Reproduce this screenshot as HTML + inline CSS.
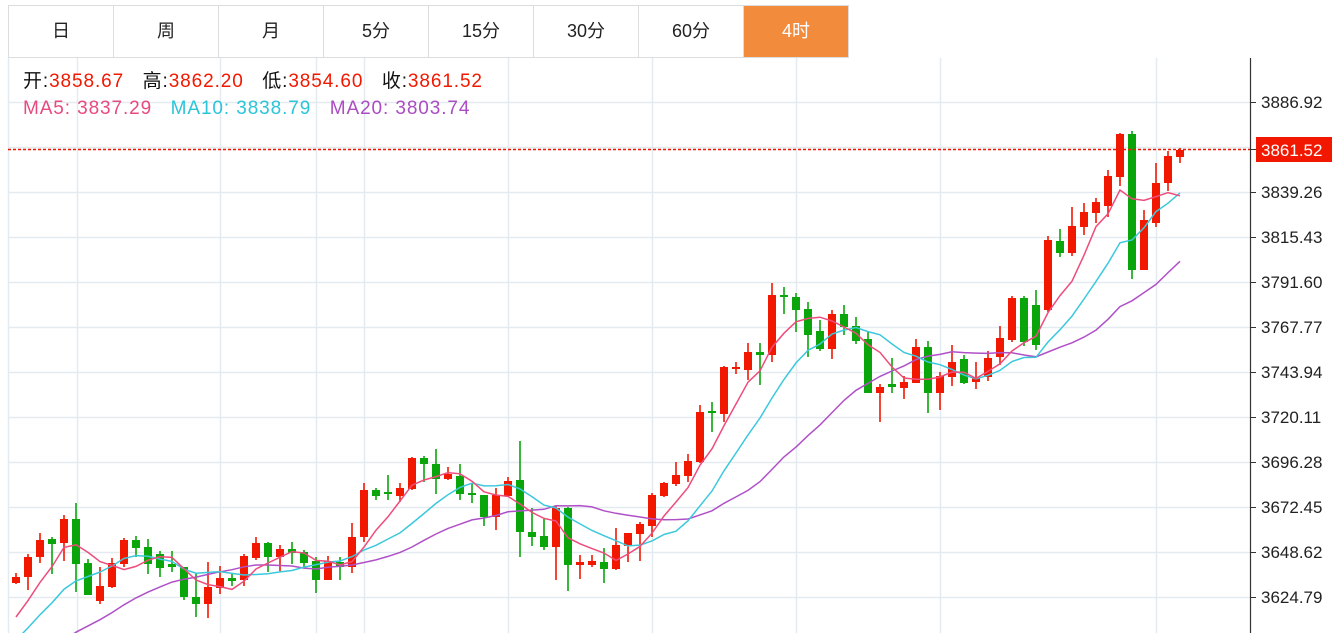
<!DOCTYPE html>
<html><head><meta charset="utf-8">
<style>
html,body{margin:0;padding:0;background:#fff;width:1332px;height:633px;overflow:hidden;font-family:"Liberation Sans","Noto Sans CJK SC",sans-serif;position:relative}
.tabs{position:absolute;left:8px;top:5px;height:53px;display:flex;border:1px solid #ddd;border-right:none;box-sizing:border-box}
.tab{width:105px;height:51px;line-height:51px;text-align:center;font-size:18px;color:#222;border-right:1px solid #ddd;box-sizing:border-box}
.tab.on{background:#f28c3c;color:#fff;}
.leg{position:absolute;left:23px;font-size:19px;letter-spacing:0.9px;white-space:nowrap;line-height:22px}
</style></head><body>
<svg id="c" width="1332" height="633" style="position:absolute;left:0;top:0"></svg>
<div class="tabs">
<div class="tab">日</div><div class="tab">周</div><div class="tab">月</div><div class="tab">5分</div><div class="tab">15分</div><div class="tab">30分</div><div class="tab">60分</div><div class="tab on">4时</div>
</div>
<div class="leg" style="top:71px;color:#111">开:<span style="color:#f21800">3858.67</span>&nbsp;&nbsp; 高:<span style="color:#f21800">3862.20</span>&nbsp;&nbsp; 低:<span style="color:#f21800">3854.60</span>&nbsp;&nbsp; 收:<span style="color:#f21800">3861.52</span></div>
<div class="leg" style="top:98px"><span style="color:#e84a7f">MA5: 3837.29</span>&nbsp;&nbsp; <span style="color:#2cc4d8">MA10: 3838.79</span>&nbsp;&nbsp; <span style="color:#ab4cc2">MA20: 3803.74</span></div>
<script>
var D=[
[583,577,573,584,0],[577,557,554,590,0],[557,540,533,563,0],[539,544,537,574,1],[543,519,515,561,0],
[519,564,503,592,1],[563,595,559,595,1],[601,586,567,604,0],[587,563,558,588,0],[564,540,538,567,0],
[540,548,536,557,1],[547,564,539,574,1],[554,568,551,577,1],[564,567,551,572,1],[567,597,567,600,1],
[597,604,573,617,1],[604,587,562,618,0],[588,578,566,594,0],[578,581,573,586,1],[580,556,554,586,0],
[558,543,537,560,0],[543,557,542,572,1],[557,549,545,571,0],[549,553,542,564,1],[552,563,550,567,1],
[561,580,557,593,1],[580,561,556,580,0],[562,567,557,580,1],[567,537,523,573,0],[537,490,483,542,0],
[490,496,488,500,1],[492,494,475,500,1],[496,488,483,502,0],[489,458,457,490,0],[458,464,456,482,1],
[464,479,449,494,1],[479,474,467,480,0],[476,494,464,500,1],[493,495,483,503,1],[495,517,495,526,1],
[517,495,488,530,0],[496,481,477,497,0],[480,532,441,557,1],[532,537,508,546,1],[536,547,519,550,1],
[547,508,506,580,0],[508,565,507,591,1],[565,562,555,579,0],[565,561,555,567,0],[562,569,548,583,1],
[569,545,528,570,0],[546,533,533,562,0],[534,524,522,561,0],[526,495,493,537,0],[496,483,482,497,0],
[484,475,462,486,0],[476,461,454,482,0],[462,412,405,463,0],[411,413,402,432,1],[414,367,366,422,0],
[368,367,362,374,0],[370,352,343,380,0],[352,355,343,385,1],[355,295,283,362,0],[295,297,287,314,1],
[297,310,293,332,1],[309,335,302,357,1],[331,349,320,351,1],[349,314,310,359,0],[314,327,305,335,1],
[326,341,317,344,1],[339,393,332,393,1],[393,387,384,422,0],[384,387,358,393,1],[388,382,376,399,0],
[383,347,339,383,0],[347,393,341,413,1],[393,376,372,410,0],[377,362,345,386,0],[359,383,355,384,1],
[382,378,362,389,0],[377,358,351,381,0],[357,338,326,365,0],[340,298,296,342,0],[298,342,296,346,1],
[305,345,290,350,1],[310,240,236,312,0],[241,253,229,257,1],[253,226,207,256,0],[227,212,203,235,0],
[213,202,198,223,0],[206,176,170,217,0],[177,134,133,186,0],[134,270,131,279,1],[270,220,210,270,0],
[223,183,163,227,0],[183,156,151,191,0],[157,150,148,163,0]];
var s='';
var gx=[8,77,220,316,364,508,652,796,940,1156];
gx.forEach(function(x){s+='<line x1="'+(x+.5)+'" y1="58" x2="'+(x+.5)+'" y2="633" stroke="#e3ebf1" stroke-width="1.5"/>';});
for(var y=102;y<633;y+=45){s+='<line x1="8" y1="'+(y+.5)+'" x2="1250" y2="'+(y+.5)+'" stroke="#e3ebf1" stroke-width="1.5"/>';}
D.forEach(function(d,i){var x=16+12*i;var c=d[4]?'#0aa50a':'#f21800';
var t=Math.min(d[0],d[1]),b=Math.max(d[0],d[1]);if(b-t<2)b=t+2;
s+='<line x1="'+x+'" y1="'+d[2]+'" x2="'+x+'" y2="'+d[3]+'" stroke="'+c+'" stroke-width="1.6"/>';
s+='<rect x="'+(x-4)+'" y="'+t+'" width="8" height="'+(b-t)+'" fill="'+c+'"/>';});
var cl=[];for(var k=0;k<19;k++)cl.push(760-k*8.06);
D.forEach(function(d){cl.push(d[1]);});
function ma(n,col){var p=[];for(var i=0;i<D.length;i++){var j=i+19,sm=0;for(var q=0;q<n;q++)sm+=cl[j-q];p.push((16+12*i)+','+(sm/n).toFixed(1));}
s+='<polyline points="'+p.join(' ')+'" fill="none" stroke="'+col+'" stroke-width="1.5"/>';}
ma(20,'#b050c8');ma(10,'#3cc8dc');ma(5,'#ee4c7c');
s+='<line x1="8" y1="149.5" x2="1250" y2="149.5" stroke="#f21800" stroke-width="1.5" stroke-dasharray="3,2"/>';
s+='<line x1="1250.5" y1="58" x2="1250.5" y2="633" stroke="#333" stroke-width="1.2"/>';
var lb=['3886.92','3863.09','3839.26','3815.43','3791.60','3767.77','3743.94','3720.11','3696.28','3672.45','3648.62','3624.79'];
lb.forEach(function(t,i){var y=102+45*i;if(i==1)return;
s+='<line x1="1250" y1="'+(y+.5)+'" x2="1256" y2="'+(y+.5)+'" stroke="#333"/>';
s+='<text x="1261" y="'+(y+6)+'" font-size="17" fill="#222" font-family="Liberation Sans,sans-serif">'+t+'</text>';});
s+='<line x1="1250" y1="149.5" x2="1256" y2="149.5" stroke="#333"/>';
s+='<rect x="1256" y="137" width="76" height="25" fill="#f21800"/>';
s+='<text x="1261" y="156" font-size="17" fill="#fff" font-family="Liberation Sans,sans-serif">3861.52</text>';
document.getElementById('c').innerHTML=s;
</script>
</body></html>
